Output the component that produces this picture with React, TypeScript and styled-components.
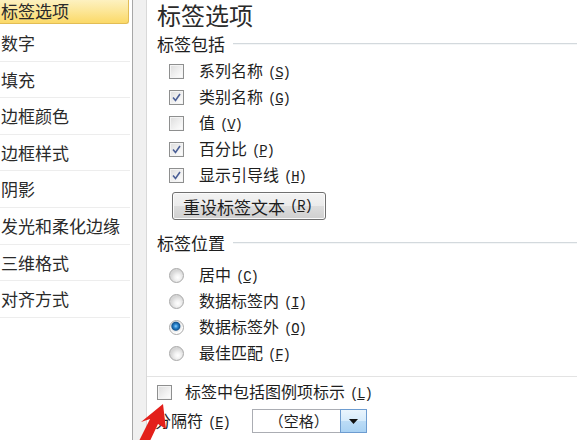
import styled, {createGlobalStyle} from "styled-components";

const GlobalStyle = createGlobalStyle`
    html, body {
        margin: 0;
        padding: 0;
        background: #ffffff;
    }

    body {
        font-family: "Noto Sans CJK SC", "Liberation Sans", sans-serif;
        color: #1e1e1e;
    }
`;

const navItems = ["标签选项", "数字", "填充", "边框颜色", "边框样式", "阴影", "发光和柔化边缘", "三维格式", "对齐方式"];

const includeItems = [
    {label: "系列名称", key: "S", checked: false},
    {label: "类别名称", key: "G", checked: true},
    {label: "值", key: "V", checked: false},
    {label: "百分比", key: "P", checked: true},
    {label: "显示引导线", key: "H", checked: true},
];

const positionItems = [
    {label: "居中", key: "C", selected: false},
    {label: "数据标签内", key: "I", selected: false},
    {label: "数据标签外", key: "O", selected: true},
    {label: "最佳匹配", key: "F", selected: false},
];

function Shortcut({k}: { k: string }) {
    return <Key>(<u>{k}</u>)</Key>;
}

function CheckBox({checked}: { checked: boolean }) {
    return <Box>
        {checked && <svg width="11" height="11" viewBox="0 0 11 11">
            <path d="M2 5.5 L4.5 8.5 L9 2" fill="none" stroke="#4b5f96" strokeWidth="1.6"/>
        </svg>}
    </Box>;
}

export default function App() {
    return <>
        <GlobalStyle/>
        <Screen>
            <NavList>
                {navItems.map((item, i) => <NavItem key={item} $active={i === 0}>{item}</NavItem>)}
            </NavList>
            <Gutter/>
            <Panel>
                <Title>标签选项</Title>
                <SectionHeader>标签包括</SectionHeader>
                <OptionList>
                    {includeItems.map(item => <OptionRow key={item.key}>
                        <CheckBox checked={item.checked}/>
                        <Label>{item.label}<Shortcut k={item.key}/></Label>
                    </OptionRow>)}
                </OptionList>
                <ResetButton>重设标签文本<Shortcut k="R"/></ResetButton>
                <SectionHeader $top={10}>标签位置</SectionHeader>
                <OptionList $top={8}>
                    {positionItems.map(item => <OptionRow key={item.key}>
                        <Radio $selected={item.selected}/>
                        <Label>{item.label}<Shortcut k={item.key}/></Label>
                    </OptionRow>)}
                </OptionList>
                <Divider/>
                <LegendRow>
                    <CheckBox checked={false}/>
                    <Label $gap={13}>标签中包括图例项标示<Shortcut k="L"/></Label>
                </LegendRow>
                <SeparatorRow>
                    <Label>分隔符<Shortcut k="E"/></Label>
                    <Select>
                        <SelectValue>（空格）</SelectValue>
                        <SelectButton>
                            <svg width="9" height="5" viewBox="0 0 9 5">
                                <path d="M0 0 H9 L4.5 5 Z" fill="#111"/>
                            </svg>
                        </SelectButton>
                    </Select>
                </SeparatorRow>
            </Panel>
            <Pointer width="32" height="40" viewBox="0 0 32 40">
                <path d="M26 1 L29 26 L21 21 L12 40 L1 40 L13 16 L4 19 Z" fill="#e3201b"/>
            </Pointer>
        </Screen>
    </>;
}

const Screen = styled.div`
    position: relative;
    display: flex;
    width: 577px;
    height: 440px;
    overflow: hidden;
    background: #ffffff;
`;

const NavList = styled.div`
    display: flex;
    flex-direction: column;
    width: 132px;
    flex-shrink: 0;
    border-right: 1px solid #a7a7a7;
    background: #ffffff;
`;

const NavItem = styled.div<{ $active: boolean }>`
    flex-shrink: 0;
    height: ${({$active}) => $active ? "24px" : "36.6px"};
    line-height: ${({$active}) => $active ? "22px" : "36px"};
    width: ${({$active}) => $active ? "129px" : "130px"};
    padding-left: 1px;
    font-size: 17px;
    color: #2a2a2a;
    box-sizing: border-box;
    border-bottom: 1px solid ${({$active}) => $active ? "#e2bd55" : "#ededed"};
    border-right: ${({$active}) => $active ? "1px solid #e2bd55" : "none"};
    border-bottom-right-radius: ${({$active}) => $active ? "3px" : "0"};
    background: ${({$active}) => $active
            ? "linear-gradient(#fdf1c0 0%, #fce79a 45%, #fbd968 100%)"
            : "transparent"};
    margin-bottom: ${({$active}) => $active ? "1px" : "0"};
    white-space: nowrap;
`;

const Gutter = styled.div`
    width: 13px;
    flex-shrink: 0;
    background: #f0f0f0;
    border-right: 1px solid #d9d9d9;
`;

const Panel = styled.div`
    flex: 1;
    display: flex;
    flex-direction: column;
    padding-left: 10px;
`;

const Title = styled.div`
    height: 27px;
    padding-top: 1px;
    line-height: 28px;
    font-size: 24px;
    color: #2a2a2a;
`;

const SectionHeader = styled.div<{ $top?: number }>`
    display: flex;
    align-items: center;
    gap: 8px;
    height: 24px;
    margin-top: ${({$top}) => $top ?? 3}px;
    font-size: 17px;
    color: #1e1e1e;

    &::after {
        content: "";
        flex: 1;
        border-top: 1px solid #d3d9dd;
        border-bottom: 1px solid #f4f6f7;
        margin-top: 1px;
    }
`;

const OptionList = styled.div<{ $top?: number }>`
    display: flex;
    flex-direction: column;
    margin-top: ${({$top}) => $top ?? 3}px;
    padding-left: 12px;
`;

const OptionRow = styled.div`
    display: flex;
    align-items: center;
    height: 26px;
`;

const Label = styled.span<{ $gap?: number }>`
    margin-left: ${({$gap}) => $gap ?? 15}px;
    font-size: 16px;
    line-height: 20px;
    white-space: nowrap;
`;

const Key = styled.span`
    margin-left: 5px;
    font-family: "Liberation Mono", monospace;
    font-size: 14px;
    letter-spacing: -1.2px;
`;

const Box = styled.span`
    display: flex;
    align-items: center;
    justify-content: center;
    width: 13px;
    height: 13px;
    flex-shrink: 0;
    border: 1px solid #8e8f8f;
    background: linear-gradient(135deg, #dcdcdc 0%, #f2f2f2 60%, #ffffff 100%);
    box-shadow: inset 0 0 0 1px #f4f4f4;
`;

const Radio = styled.span<{ $selected: boolean }>`
    width: 13px;
    height: 13px;
    flex-shrink: 0;
    border-radius: 50%;
    border: 1px solid #a9a9a9;
    background: ${({$selected}) => $selected
            ? "radial-gradient(circle at 45% 40%, #8fd0ff 0, #2a86cf 2px, #14548f 4px, #e9e9e9 5px, #ffffff 7px)"
            : "radial-gradient(circle at 60% 65%, #ffffff 0, #f2f2f2 3px, #d6d6d6 7px)"};
`;

const ResetButton = styled.button`
    align-self: flex-start;
    display: flex;
    align-items: center;
    height: 28px;
    margin-top: 4px;
    margin-left: 15px;
    padding: 0 10px;
    width: 154px;
    border: 1px solid #707070;
    border-radius: 3px;
    background: linear-gradient(#f3f3f3 0%, #ebebeb 50%, #dddddd 51%, #cfcfcf 100%);
    box-shadow: inset 0 0 0 1px #fbfbfb;
    font-family: "Noto Sans CJK SC", sans-serif;
    font-size: 17px;
    color: #1e1e1e;
    white-space: nowrap;
`;

const Divider = styled.div`
    margin: 10px 0 0 -10px;
    border-top: 1px solid #e3e3e3;
`;

const LegendRow = styled.div`
    display: flex;
    align-items: center;
    height: 26px;
    margin-top: 2px;
`;

const SeparatorRow = styled.div`
    display: flex;
    align-items: center;
    gap: 22px;
    height: 24px;
    margin-top: 4px;

    & > span {
        margin-left: -2px;
    }
`;

const Select = styled.div`
    display: flex;
    align-items: stretch;
    width: 115px;
    height: 24px;
    box-sizing: border-box;
    border: 1px solid #abadb3;
    border-right: none;
    background: #ffffff;
`;

const SelectValue = styled.span`
    flex: 1;
    padding-left: 16px;
    font-size: 15px;
    line-height: 22px;
    white-space: nowrap;
`;

const SelectButton = styled.span`
    display: flex;
    align-items: center;
    justify-content: center;
    width: 25px;
    margin: -1px 0;
    border: 1px solid #6d9cd0;
    background: linear-gradient(#eaf5fd 0%, #d6ebfb 50%, #bcdcf6 51%, #a9d2f3 100%);
`;

const Pointer = styled.svg`
    position: absolute;
    left: 137px;
    top: 403px;
`;
